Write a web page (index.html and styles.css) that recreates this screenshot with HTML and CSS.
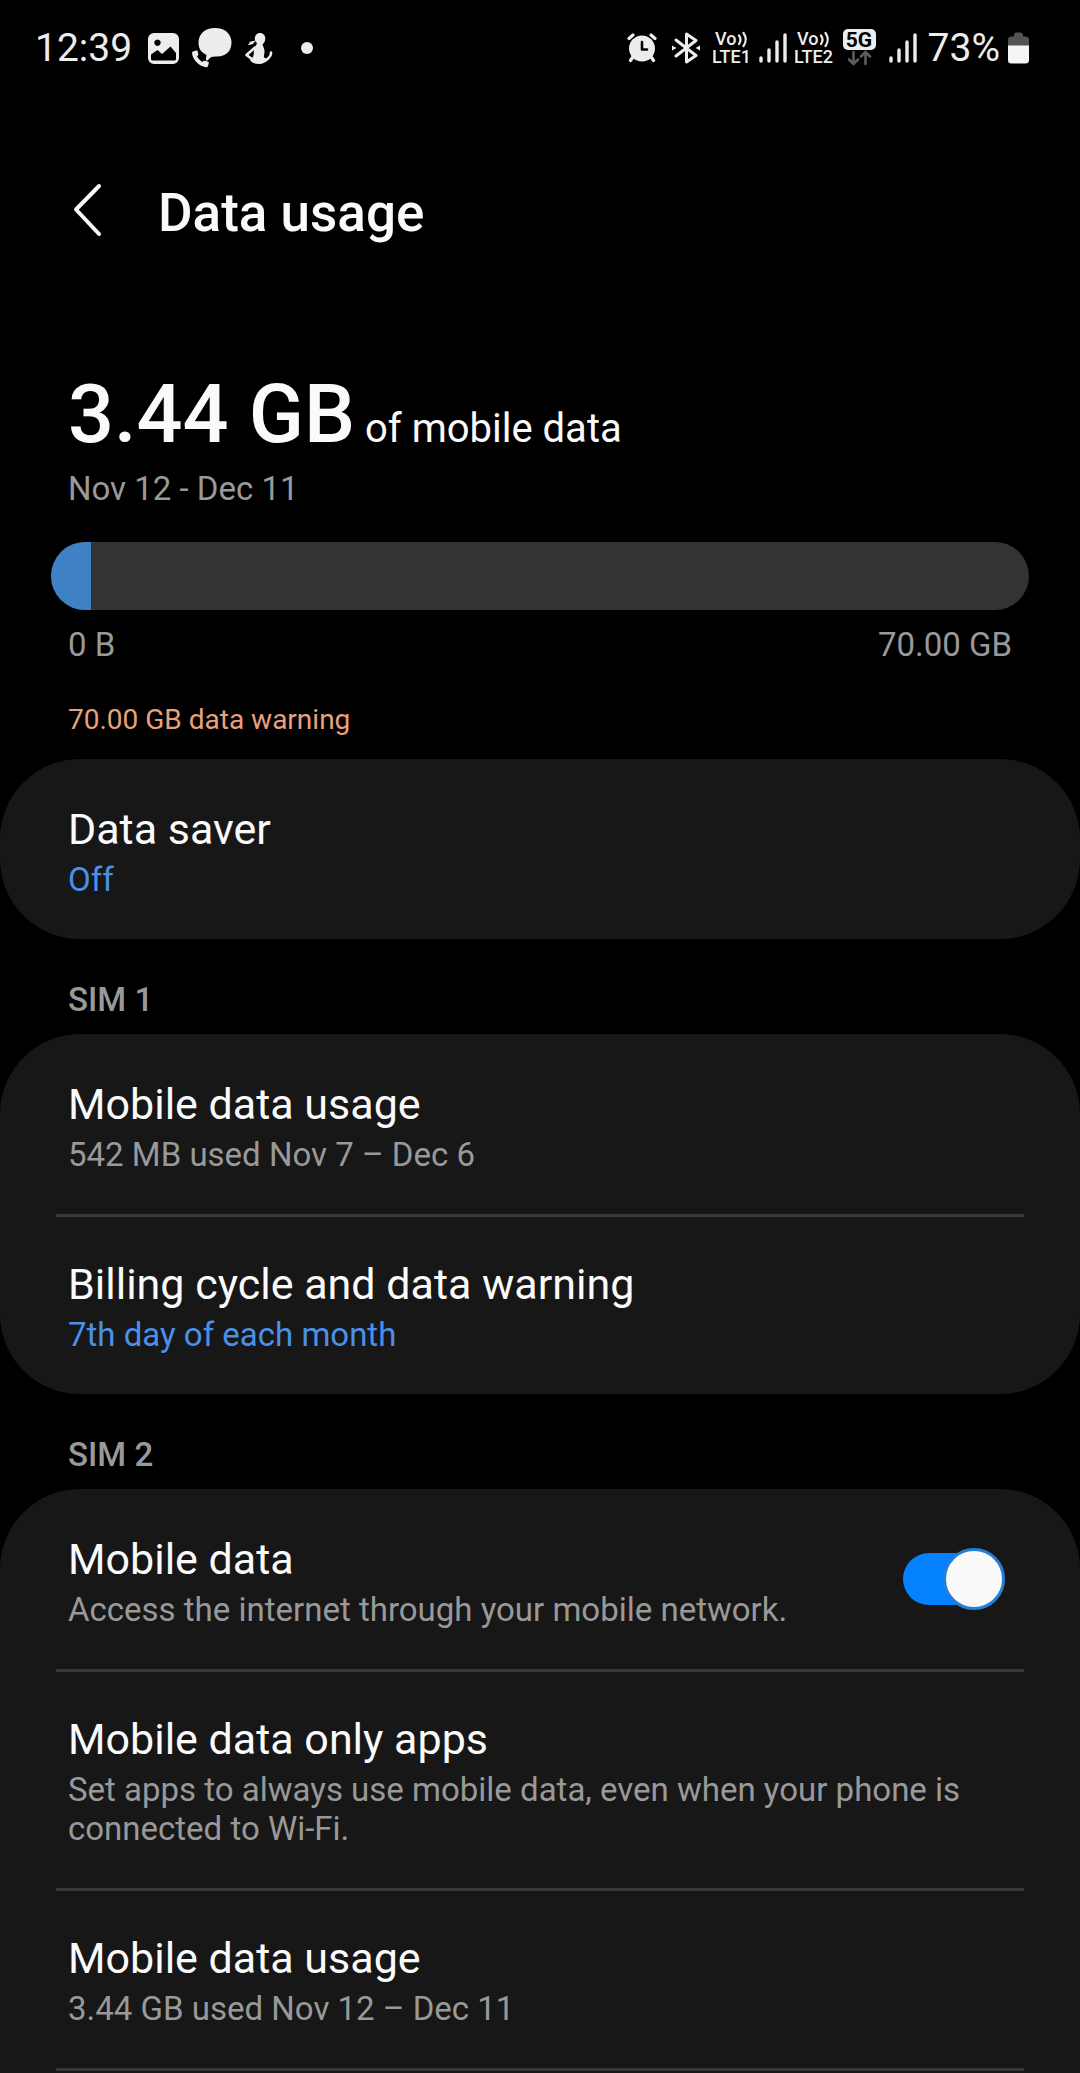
FILE: index.html
```html
<!DOCTYPE html>
<html lang="en">
<head>
  <meta charset="UTF-8" />
  <meta name="viewport" content="width=device-width, initial-scale=1.0" />
  <title>Data usage</title>
  <link rel="stylesheet" href="styles.css">
</head>
<body>
  <div class="status-bar">
    <div class="status-left">
      <span class="clock">12:39</span>
      <svg width="31" height="31" viewBox="0 0 31 31">
        <path fill="#ededed" fill-rule="evenodd" d="M6 0h19a6 6 0 0 1 6 6v19a6 6 0 0 1-6 6H6a6 6 0 0 1-6-6V6a6 6 0 0 1 6-6zM9.500 6.500a3.200 3.200 0 1 0 .01 0zM3 21.500V26q0 1.500 1.500 1.500h22q1.500 0 1.500-1.500v-6L22.500 13.500 14 21l-4.500-4z" />
      </svg>
      <svg width="40" height="40" viewBox="0 0 40 40">
        <path fill="#ededed" d="M23 0C33 0 39.500 6 39.500 14.500S34 28.500 25 28.500c-3 0-5 0-6.500 1l-3 3c-1 .500-1.800-.5-1.500-1.500l.500-4C8.500 24 6.500 20 6.500 14.500 6.500 6 13 0 23 0z" />
        <path fill="#ededed" d="M1 23.500l3-1c1-.2 1.600.3 1.800 1.200l.5 2.600c0 1-.5 1.500-1.300 2 1.200 2.500 3.200 4.500 5.700 5.700.5-.8 1-1.300 2-1.200l3 .7c.9.200 1.300.9 1.100 1.800L16 38c-.3 1-1 1.300-2 1.200C6.500 38 1 32 .1 25.500c-.1-1 .1-1.700.9-2z" />
      </svg>
      <svg width="28" height="31" viewBox="0 0 28 31">
        <g fill="none" stroke="#ededed" stroke-width="2.600" stroke-linecap="round" stroke-linejoin="round">
          <path d="M10 14.500L1.500 22l8 6" />
          <path d="M26 19.500q.5 4-6 8.500" />
        </g>
        <path fill="#ededed" d="M15 0c3.400 0 5.300 2.500 5.300 5.500 0 2.600-1 4.500-2.800 5.700.4 2.300 2 4 2 7 0 2.800-.8 4.500-.5 6.300l3.500 1.500c-1.500 3-4.500 5-8.500 5s-7-1-9-4l3-3c.8-2 1-4.500.8-7 .2-3 2.700-4.500 3.200-7C10.500 9 9.800 7.700 9.800 5.500 9.800 2.500 11.800 0 15 0z" />
        <path fill="#ededed" d="M10.500 7.500l-2.500 3.500-5 1.300 2-3.500z" />
      </svg>
      <span class="dot"></span>
    </div>
    <div class="status-right">
      <svg class="alarm" width="30" height="30" viewBox="0 0 30 30">
        <g stroke="#ededed" stroke-width="3.200" stroke-linecap="round">
          <path d="M2 5.500L6 2M28 5.500L24 2M5.500 24.500L3.500 27.500M24.500 24.500L26.500 27.500" />
        </g>
        <circle cx="15" cy="15.500" r="13" fill="#ededed" />
        <path d="M15 9v7.500h5" fill="none" stroke="#000" stroke-width="2.600" stroke-linecap="round" stroke-linejoin="round" />
      </svg>
      <svg class="bluetooth" width="28" height="32" viewBox="0 0 28 32">
        <path d="M4 8l20 15.500-9.500 6.500V2L24 8.500 4 24" fill="none" stroke="#ededed" stroke-width="3" stroke-linecap="round" stroke-linejoin="round" />
        <path d="M0 13.500v5l4.500-2.500zM28 13.500v5L23.500 16z" fill="#ededed" />
      </svg>
      <svg width="38" height="44" viewBox="0 -6 38 44">
        <text class="volte-text" x="2" y="13">Vo</text>
        <path d="M26 3.500q3 4 0 8.500M30.500 1q4.500 6.500 0 13" fill="none" stroke="#ededed" stroke-width="2.200" stroke-linecap="round" />
        <text class="volte-text" x="-1" y="31">LTE1</text>
      </svg>
      <svg width="28" height="30" viewBox="0 0 28 30">
        <path d="M2 25v3M10 17v11M18 9v19M26 2v26" stroke="#ededed" stroke-width="3.400" stroke-linecap="round" />
      </svg>
      <svg width="40" height="44" viewBox="0 -6 40 44">
        <text class="volte-text" x="2" y="13">Vo</text>
        <path d="M26 3.500q3 4 0 8.500M30.500 1q4.500 6.500 0 13" fill="none" stroke="#ededed" stroke-width="2.200" stroke-linecap="round" />
        <text class="volte-text" x="-1" y="31">LTE2</text>
      </svg>
      <svg class="network" width="33" height="38" viewBox="0 0 33 38">
        <rect width="33" height="21" rx="5" fill="#ededed" />
        <text class="network-text" x="16" y="18" text-anchor="middle">5G</text>
        <path d="M10.500 23v11.500M6 30.500l4.500 4.500 4.500-4.500M22.500 35V23.500M18 27.500l4.500-4.500 4.500 4.500" fill="none" stroke="#5c5c5c" stroke-width="2.600" stroke-linecap="round" stroke-linejoin="round" />
      </svg>
      <svg width="28" height="30" viewBox="0 0 28 30">
        <path d="M2 25v3M10 17v11M18 9v19M26 2v26" stroke="#ededed" stroke-width="3.400" stroke-linecap="round" />
      </svg>
      <span class="percent">73%</span>
      <svg width="21" height="32" viewBox="0 0 21 32">
        <path fill="#545454" d="M0 14V8q0-3.500 3.500-3.500H6V3q0-2.500 2.500-2.500h4Q15 .5 15 3v1.500h2.500Q21 4.500 21 8v6z" />
        <path fill="#f5f5f5" d="M0 13.500h21V28q0 3.500-3.500 3.500h-14Q0 31.500 0 28z" />
      </svg>
    </div>
  </div>

  <header class="header">
    <button class="back" type="button" aria-label="Back">
      <svg width="30" height="54" viewBox="0 0 30 54">
        <path d="M27 3L4 26.500 27 51" fill="none" stroke="#fafafa" stroke-width="4" stroke-linecap="round" stroke-linejoin="round" />
      </svg>
    </button>
    <h1>Data usage</h1>
  </header>

  <section class="summary">
    <p class="total"><strong>3.44 GB</strong> of mobile data</p>
    <p class="period">Nov 12 - Dec 11</p>
    <div class="bar" role="progressbar" aria-label="Mobile data used" aria-valuemin="0" aria-valuemax="70" aria-valuenow="3.44">
      <div class="bar-fill" style="width: 4.100%"></div>
    </div>
    <div class="scale">
      <span>0 B</span>
      <span>70.00 GB</span>
    </div>
    <p class="warning">70.00 GB data warning</p>
  </section>

  <ul class="card">
    <li>
      <a class="row" href="#">
        <span class="title">Data saver</span>
        <span class="sub blue">Off</span>
      </a>
    </li>
  </ul>

  <h2>SIM 1</h2>
  <ul class="card">
    <li>
      <a class="row" href="#">
        <span class="title">Mobile data usage</span>
        <span class="sub">542 MB used Nov 7 – Dec 6</span>
      </a>
    </li>
    <li>
      <a class="row" href="#">
        <span class="title">Billing cycle and data warning</span>
        <span class="sub blue">7th day of each month</span>
      </a>
    </li>
  </ul>

  <h2>SIM 2</h2>
  <ul class="card card-last">
    <li class="with-switch">
      <label class="row" for="mobile-data">
        <span class="title">Mobile data</span>
        <span class="sub">Access the internet through your mobile network.</span>
      </label>
      <input class="switch" type="checkbox" id="mobile-data" checked />
    </li>
    <li>
      <a class="row" href="#">
        <span class="title">Mobile data only apps</span>
        <span class="sub">Set apps to always use mobile data, even when your phone is connected to Wi-Fi.</span>
      </a>
    </li>
    <li>
      <a class="row" href="#">
        <span class="title">Mobile data usage</span>
        <span class="sub">3.44 GB used Nov 12 – Dec 11</span>
      </a>
    </li>
  </ul>
</body>
</html>
```
FILE: styles.css
```css
*, *::before, *::after {
  box-sizing: border-box;
}
body {
  font-family: Roboto, sans-serif;
  display: flex;
  flex-direction: column;
  min-height: 100vh;
  margin: 0;
  background-color: #000;
  color: #fafafa;
}
h1, h2, p, ul {
  margin: 0;
  padding: 0;
}
svg {
  display: block;
  flex: none;
}

/* status bar */
.status-bar {
  display: flex;
  justify-content: space-between;
  height: 96px;
  padding: 0 51px 0 35px;
  color: #ededed;
  font-size: 39px;
}
.status-left, .status-right {
  display: flex;
  align-items: center;
}
.status-left {
  gap: 13px;
}
.clock {
  margin-right: 3px;
}
.dot {
  width: 12px;
  height: 12px;
  margin-left: 15px;
  border-radius: 50%;
  background: #ededed;
}
.status-right {
  gap: 8px;
}
.alarm {
  margin-right: 7px;
}
.bluetooth, .network {
  margin-right: 5px;
}
.percent {
  margin-left: 3px;
}
.volte-text {
  font-size: 18px;
  font-weight: 500;
  fill: #ededed;
}
.network-text {
  font-size: 21px;
  font-weight: 700;
  fill: #000;
}

/* header */
.header {
  display: flex;
  align-items: center;
  gap: 56px;
  padding: 86px 72px 0;
}
.back {
  padding: 0 0 6px;
  border: none;
  background: none;
  cursor: pointer;
}
h1 {
  font-size: 53px;
  font-weight: 500;
  line-height: 62px;
}

/* usage summary */
.summary {
  padding: 131px 51px 21px;
}
.total, .period, .scale, .warning {
  padding: 0 17px;
}
.total {
  font-size: 40px;
  line-height: 80px;
}
.total strong {
  font-size: 81px;
  font-weight: 500;
}
.period, .scale {
  color: #999;
  font-size: 33px;
  line-height: 40px;
}
.bar {
  height: 68px;
  margin: 33px 0 15px;
  border-radius: 34px;
  background: #333;
  overflow: hidden;
}
.bar-fill {
  height: 100%;
  background: #4080c4;
}
.scale {
  display: flex;
  justify-content: space-between;
}
.warning {
  margin-top: 37px;
  color: #e9a07c;
  font-size: 28px;
  line-height: 36px;
}

/* settings list */
.card {
  padding: 0 56px;
  border-radius: 80px;
  background: #171717;
  list-style: none;
}
.card li {
  padding: 41px 12px 40px;
  border-top: 3px solid #383838;
}
.card li:first-child {
  border-color: transparent;
}
.card-last {
  flex: 1;
  border-radius: 80px 80px 0 0;
}
.card-last li:last-child {
  border-bottom: 3px solid #383838;
}
.row {
  display: flex;
  flex-direction: column;
  gap: 5px;
  color: inherit;
  text-decoration: none;
}
.title {
  font-size: 43px;
  line-height: 52px;
}
.sub {
  color: #999;
  font-size: 33px;
  line-height: 39px;
}
.blue {
  color: #4a90e8;
}
h2 {
  padding: 41px 68px 14px;
  color: #999;
  font-size: 33px;
  font-weight: 500;
  line-height: 40px;
}

/* on/off switch */
.with-switch {
  display: flex;
  align-items: center;
  justify-content: space-between;
}
.switch {
  appearance: none;
  position: relative;
  flex: none;
  width: 102px;
  height: 62px;
  margin: 0 7px 4px 0;
  border-radius: 31px;
  cursor: pointer;
}
.switch::before {
  content: "";
  position: absolute;
  inset: 5px 2px 5px 0;
  border-radius: 26px;
  background: #555;
}
.switch::after {
  content: "";
  position: absolute;
  top: 0;
  left: 0;
  width: 62px;
  height: 62px;
  border: 3px solid #777;
  border-radius: 50%;
  background: #fafafa;
}
.switch:checked::before {
  background: #0381fe;
}
.switch:checked::after {
  left: 40px;
  border-color: #257fd6;
}
```
